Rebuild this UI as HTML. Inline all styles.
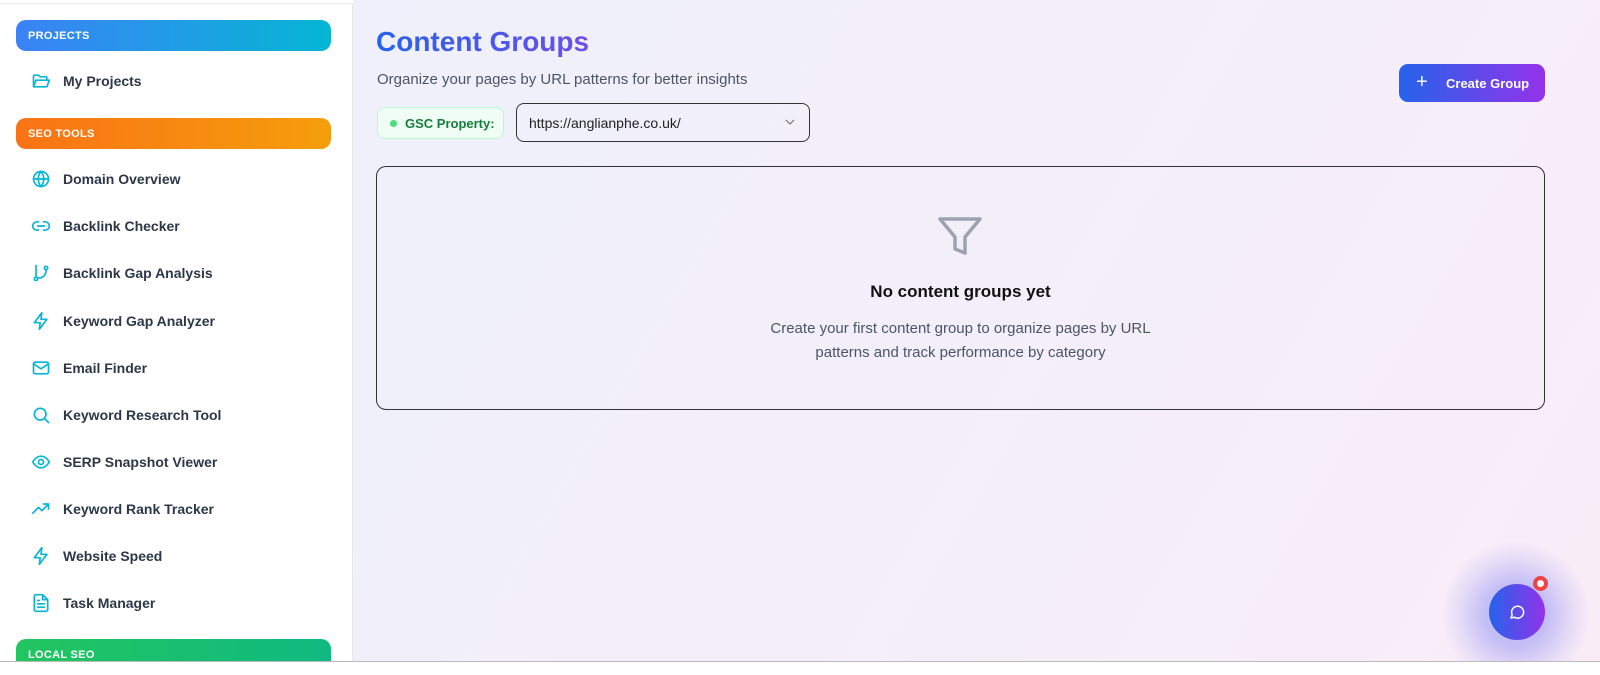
<!DOCTYPE html>
<html><head><style>
*{box-sizing:border-box;margin:0;padding:0}
body{width:1600px;height:675px;overflow:hidden;font-family:"Liberation Sans",sans-serif;background:#fff;position:relative}
.side{position:absolute;left:0;width:353px;height:659px;background:#fff;border-right:1px solid #e5e7eb;border-top:1px solid #e5e7eb;top:3px;overflow:hidden}
.hdr{position:absolute;left:16px;width:315px;height:31px;border-radius:10px;color:#fff;font-weight:bold;font-size:11px;padding:10px 12px;letter-spacing:.3px}
.item{position:absolute;left:31px;height:24px;display:flex;align-items:center;font-size:14px;font-weight:bold;color:#2d3748}
.item svg{width:20px;height:20px;margin-right:12px;fill:none;stroke:#06b6d4;stroke-width:2;stroke-linecap:round;stroke-linejoin:round}
.main{position:absolute;left:353px;top:0;width:1247px;height:662px;overflow:hidden;background:linear-gradient(120deg,#eff0fb 0%,#f3effa 50%,#f9ecf7 100%)}
.bottom{position:absolute;left:0;top:661px;width:1600px;height:14px;background:#fff;border-top:1px solid #bbb;z-index:5}
</style></head><body>
<div class="side">
<div class="hdr" style="top:16px;background:linear-gradient(90deg,#3b82f6,#06b6d4)">PROJECTS</div>
<div class="item" style="top:65px"><svg viewBox="0 0 24 24"><path d="M3 19V6a1 1 0 0 1 1-1h5l2 2h7a1 1 0 0 1 1 1v2M3 19l3-8h16l-3 8z"/></svg>My Projects</div>
<div class="hdr" style="top:114px;background:linear-gradient(90deg,#f97316,#f59e0b)">SEO TOOLS</div>
<div class="item" style="top:163px"><svg viewBox="0 0 24 24"><circle cx="12" cy="12" r="9"/><path d="M3 12h18M12 3a14 14 0 0 1 0 18M12 3a14 14 0 0 0 0 18"/></svg>Domain Overview</div>
<div class="item" style="top:210px"><svg viewBox="0 0 24 24"><path d="M9 17H7a5 5 0 0 1 0-10h2M15 7h2a5 5 0 0 1 0 10h-2M8 12h8"/></svg>Backlink Checker</div>
<div class="item" style="top:257px"><svg viewBox="0 0 24 24"><circle cx="6" cy="19" r="2"/><circle cx="18" cy="6" r="2"/><path d="M6 3v14M18 8a9 9 0 0 1-10 10"/></svg>Backlink Gap Analysis</div>
<div class="item" style="top:305px"><svg viewBox="0 0 24 24"><path d="M13 2L4 14h7l-1 8 9-12h-7z"/></svg>Keyword Gap Analyzer</div>
<div class="item" style="top:352px"><svg viewBox="0 0 24 24"><rect x="3" y="5" width="18" height="14" rx="2"/><path d="M3 7l9 6 9-6"/></svg>Email Finder</div>
<div class="item" style="top:399px"><svg viewBox="0 0 24 24"><circle cx="11" cy="11" r="7"/><path d="M21 21l-5-5"/></svg>Keyword Research Tool</div>
<div class="item" style="top:446px"><svg viewBox="0 0 24 24"><path d="M2 12s4-7 10-7 10 7 10 7-4 7-10 7S2 12 2 12z"/><circle cx="12" cy="12" r="3"/></svg>SERP Snapshot Viewer</div>
<div class="item" style="top:493px"><svg viewBox="0 0 24 24"><path d="M2 17l7-7 4 4 8-8M15 6h6v6"/></svg>Keyword Rank Tracker</div>
<div class="item" style="top:540px"><svg viewBox="0 0 24 24"><path d="M13 2L4 14h7l-1 8 9-12h-7z"/></svg>Website Speed</div>
<div class="item" style="top:587px"><svg viewBox="0 0 24 24"><path d="M14 2H6a2 2 0 0 0-2 2v16a2 2 0 0 0 2 2h12a2 2 0 0 0 2-2V8z"/><path d="M14 2v6h6M8 13h8M8 17h8M8 9h2"/></svg>Task Manager</div>
<div class="hdr" style="top:635px;background:linear-gradient(90deg,#22c55e,#10b981)">LOCAL SEO</div>
</div>
<div class="main">
<div style="position:absolute;left:23px;top:26px;font-size:28px;font-weight:bold;background:linear-gradient(90deg,#2563eb,#6d4ee8);-webkit-background-clip:text;color:transparent">Content Groups</div>
<div style="position:absolute;left:24px;top:71px;font-size:15px;color:#4b5563">Organize your pages by URL patterns for better insights</div>
<div style="position:absolute;left:24px;top:107px;width:127px;height:32px;border:1px solid #bbf7d0;background:#f0fdf4;border-radius:8px;font-size:13px;font-weight:bold;color:#15803d;padding:8px 0 0 27px;white-space:nowrap">GSC Property:<span style="position:absolute;left:12px;top:12px;width:7px;height:7px;border-radius:50%;background:#4ade80"></span></div>
<div style="position:absolute;left:163px;top:103px;width:294px;height:39px;border:1px solid #333;border-radius:8px;font-size:14px;color:#222;padding:11px 12px">https://anglianphe.co.uk/<svg style="position:absolute;right:14px;top:15px" width="10" height="6" viewBox="0 0 10 6"><path d="M1 1l4 4 4-4" stroke="#666" fill="none"/></svg></div>
<div style="position:absolute;left:1046px;top:64px;width:146px;height:38px;border-radius:9px;background:linear-gradient(90deg,#2563eb,#9333ea);color:#fff;font-size:13px;font-weight:bold;padding:12px 0 0 47px;white-space:nowrap"><span style="position:absolute;left:17px;top:7px;font-size:20px;font-weight:normal">+</span>Create Group</div>
<div style="position:absolute;left:23px;top:166px;width:1169px;height:244px;border:1px solid #333;border-radius:10px">
<svg style="position:absolute;left:560px;top:49px" width="46" height="42" viewBox="0 0 46 42"><path d="M3 3h40L28 21v16l-10-4V21z" fill="none" stroke="#9ca3af" stroke-width="3.5" stroke-linejoin="round"/></svg>
<div style="position:absolute;left:0;width:100%;top:115px;text-align:center;font-size:17px;font-weight:bold;color:#111">No content groups yet</div>
<div style="position:absolute;left:0;width:100%;top:150px;text-align:center;font-size:15px;color:#4b5563;line-height:24px">Create your first content group to organize pages by URL<br>patterns and track performance by category</div>
</div>
<div style="position:absolute;left:1090px;top:542px;width:146px;height:146px;border-radius:50%;background:radial-gradient(circle,rgba(99,102,241,.35) 30%,rgba(99,102,241,.12) 55%,rgba(99,102,241,0) 72%)"></div>
<div style="position:absolute;left:1136px;top:584px;width:56px;height:56px;border-radius:50%;background:linear-gradient(90deg,#2563eb,#9333ea)"><svg style="position:absolute;left:19px;top:19px" width="18" height="18" viewBox="0 0 24 24"><path d="M4 20l1.5-4.5A8 8 0 1 1 8.5 19z" fill="none" stroke="#fff" stroke-width="2" stroke-linejoin="round"/></svg></div>
<div style="position:absolute;left:1180px;top:576px;width:15px;height:15px;border-radius:50%;background:#fff;border:4px solid #ef4444"></div>
</div>
<div class="bottom"></div>
</body></html>
